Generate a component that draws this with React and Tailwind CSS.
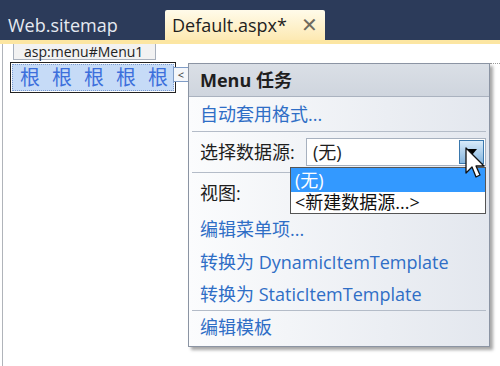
// Visual Studio designer: Menu smart-tag panel with data source dropdown open

const ITEMS = ['根', '根', '根', '根', '根'];

function Cursor() {
  return (
    <svg width="22" height="34" viewBox="0 0 22 34" className="absolute left-[465px] top-[147px]">
      <path d="M1 1 L1 26 L7 20 L11 30 L15 28 L11 19 L19 19 Z" fill="#fff" stroke="#111" strokeWidth="1.3" strokeLinejoin="round" />
    </svg>
  );
}

function Sep() {
  return <div className="mx-[3px] h-px bg-[#b4bcc8]" />;
}

function Link({ children, h }) {
  return (
    <div className={`flex items-center pl-[11px] text-[18px] text-[#2f6ec6] ${h}`}>{children}</div>
  );
}

export default function App() {
  return (
    <div className="w-[500px] h-[366px] overflow-hidden bg-white font-['Open_Sans','Noto_Sans_CJK_SC',sans-serif] relative">
      {/* Document tabs */}
      <div className="h-[40px] bg-[#2c3b5a] flex items-end">
        <div className="w-[165px] h-[30px] pl-[8px] flex items-center text-[18px] text-[#e6eaf1]">Web.sitemap</div>
        <div className="w-[160px] h-[30px] pl-[7px] pr-[7px] flex items-center justify-between rounded-t-[2px] bg-gradient-to-b from-[#fffbea] to-[#fde9b2] text-[18px] text-[#1e1e1e]">
          <span>Default.aspx*</span>
          <span className="text-[20px] text-[#6e6a60] leading-none">✕</span>
        </div>
      </div>
      <div className="h-[4px] bg-[#fce6a2]" />

      {/* Design surface */}
      <div className="h-[322px] pl-[2px]">
        <div className="h-full border-l border-[#b0b4ba] pl-[7px]">
          <div className="ml-[3px] w-[143px] h-[16px] border border-t-0 border-[#a8b0bc] bg-[#f2f2f2] flex items-center pl-[10px] text-[14px] leading-none text-[#222]">
            asp:menu#Menu1
          </div>
          <div className="mt-[2px] flex items-start">
            <div className="w-[166px] h-[31px] border border-[#222] p-px">
              <div className="h-full border border-dotted border-[#7a9ad0] bg-[#c6dbf7] flex items-center gap-[12px] pl-[7px] text-[20px] leading-none text-[#3d6fdc]">
                {ITEMS.map((t, i) => <span key={i}>{t}</span>)}
              </div>
            </div>
            <div className="mt-[5px] -ml-[3px] w-[16px] h-[15px] border border-[#7f9cc6] bg-[#f4f6fa] flex items-center justify-center text-[11px] leading-none text-[#333]">
              &lt;
            </div>
          </div>
        </div>
      </div>

      {/* Dotted design-area edge to the right of the panel */}
      <div className="absolute left-[490px] top-[63px] w-[10px] border-t border-dotted border-[#999]" />

      {/* Smart tag panel */}
      <div className="absolute left-[188px] top-[63px] w-[302px] h-[284px] border border-[#8b94a3] bg-gradient-to-r from-[#fbfcfd] to-[#e3e7ee] shadow-[3px_3px_3px_rgba(0,0,0,0.35)] flex flex-col">
        <div className="h-[33px] shrink-0 border-b border-[#aab2bf] bg-gradient-to-b from-[#dadfe6] to-[#cfd5de] flex items-center pl-[11px] text-[18px] font-bold text-[#1e1e1e]">
          Menu 任务
        </div>
        <Link h="h-[34px]">自动套用格式...</Link>
        <Sep />
        <div className="h-[40px] flex items-center pl-[11px] text-[18px] text-[#1e1e1e]">
          <span>选择数据源:</span>
          <div className="ml-auto mr-[3px] w-[180px] h-[28px] border border-[#a7b1bf] bg-white flex items-center justify-between pl-[6px] pr-px">
            <span>(无)</span>
            <div className="w-[25px] h-[24px] border border-[#3a78ad] bg-gradient-to-b from-[#d8ebfa] to-[#86b6de] flex items-center justify-center">
              <span className="w-0 h-0 border-x-[5px] border-x-transparent border-t-[6px] border-t-black" />
            </div>
          </div>
        </div>
        <Sep />
        <div className="h-[40px] flex items-center pl-[11px] text-[18px] text-[#1e1e1e]">视图:</div>
        <Link h="h-[33px]">编辑菜单项...</Link>
        <Link h="h-[32px]">转换为 DynamicItemTemplate</Link>
        <Link h="h-[32px]">转换为 StaticItemTemplate</Link>
        <Sep />
        <Link h="h-[33px]">编辑模板</Link>

        {/* Open dropdown list */}
        <div className="absolute left-[101px] top-[103px] w-[196px] h-[47px] border border-[#555] bg-white flex flex-col text-[18px]">
          <div className="h-[24px] bg-[#3399ff] text-white flex items-center pl-[4px]">(无)</div>
          <div className="h-[21px] text-[#111] flex items-center pl-[4px]">&lt;新建数据源...&gt;</div>
        </div>
      </div>

      <Cursor />
    </div>
  );
}
